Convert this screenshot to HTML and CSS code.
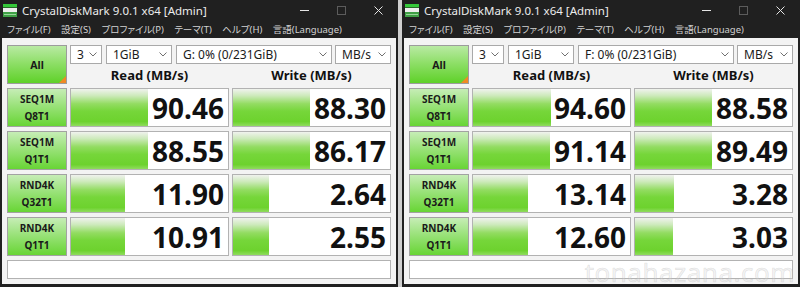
FILE: index.html
```html
<!DOCTYPE html>
<html lang="ja">
<head>
<meta charset="utf-8">
<title>CrystalDiskMark</title>
<link rel="stylesheet" href="styles.css">
</head>
<body>
<div class="screen">
  <div class="win">
    <div class="titlebar">
      <svg class="appicon" viewBox="0 0 14 13" width="14" height="13"><rect x="0" y="0" width="14" height="3" fill="#35c83a"/><rect x="0" y="3" width="14" height="1" fill="#2a6a2a"/><rect x="0" y="4" width="14" height="4" fill="#eeeeee"/><rect x="0" y="8" width="14" height="5" fill="#3f9f45"/><rect x="1" y="10" width="12" height="1" fill="#9ad69c"/></svg>
      <span class="title">CrystalDiskMark 9.0.1 x64 [Admin]</span>
      <div class="controls">
        <span class="ctl"><svg width="9" height="9" viewBox="0 0 9 9"><line x1="0" y1="4.5" x2="9" y2="4.5" stroke="#e6e6e6" stroke-width="1"/></svg></span>
        <span class="ctl"><svg width="9" height="9" viewBox="0 0 9 9"><rect x="0.5" y="0.5" width="8" height="8" fill="none" stroke="#5c5c5c" stroke-width="1"/></svg></span>
        <span class="ctl"><svg width="9" height="9" viewBox="0 0 9 9"><path d="M0.5 0.5 L8.5 8.5 M8.5 0.5 L0.5 8.5" stroke="#e6e6e6" stroke-width="1"/></svg></span>
      </div>
    </div>
    <div class="menubar"><span>ファイル(F)</span><span>設定(S)</span><span>プロファイル(P)</span><span>テーマ(T)</span><span>ヘルプ(H)</span><span>言語(Language)</span></div>
    <div class="content">
      <div class="grid">
        <div class="allbtn">All</div>
        <div class="topright">
          <div class="selects">
            <div class="sel s-count">3<svg class="chev" width="8" height="5" viewBox="0 0 8 5"><polyline points="0.5,0.5 4,4 7.5,0.5" fill="none" stroke="#707070"/></svg></div>
            <div class="sel s-size">1GiB<svg class="chev" width="8" height="5" viewBox="0 0 8 5"><polyline points="0.5,0.5 4,4 7.5,0.5" fill="none" stroke="#707070"/></svg></div>
            <div class="sel s-drive">G: 0% (0/231GiB)<svg class="chev" width="8" height="5" viewBox="0 0 8 5"><polyline points="0.5,0.5 4,4 7.5,0.5" fill="none" stroke="#707070"/></svg></div>
            <div class="sel s-unit">MB/s<svg class="chev" width="8" height="5" viewBox="0 0 8 5"><polyline points="0.5,0.5 4,4 7.5,0.5" fill="none" stroke="#707070"/></svg></div>
          </div>
          <div class="heads"><div class="head">Read (MB/s)</div><div class="head">Write (MB/s)</div></div>
        </div>
        <div class="label"><span>SEQ1M</span><span>Q8T1</span></div>
        <div class="cell" style="--w:77px">90.46</div>
        <div class="cell" style="--w:77px">88.30</div>
        <div class="label"><span>SEQ1M</span><span>Q1T1</span></div>
        <div class="cell" style="--w:77px">88.55</div>
        <div class="cell" style="--w:77px">86.17</div>
        <div class="label"><span>RND4K</span><span>Q32T1</span></div>
        <div class="cell" style="--w:54px">11.90</div>
        <div class="cell" style="--w:36px">2.64</div>
        <div class="label"><span>RND4K</span><span>Q1T1</span></div>
        <div class="cell" style="--w:54px">10.91</div>
        <div class="cell" style="--w:36px">2.55</div>
      </div>
      <div class="status"></div>
    </div>
  </div>
  <div class="win">
    <div class="titlebar">
      <svg class="appicon" viewBox="0 0 14 13" width="14" height="13"><rect x="0" y="0" width="14" height="3" fill="#35c83a"/><rect x="0" y="3" width="14" height="1" fill="#2a6a2a"/><rect x="0" y="4" width="14" height="4" fill="#eeeeee"/><rect x="0" y="8" width="14" height="5" fill="#3f9f45"/><rect x="1" y="10" width="12" height="1" fill="#9ad69c"/></svg>
      <span class="title">CrystalDiskMark 9.0.1 x64 [Admin]</span>
      <div class="controls">
        <span class="ctl"><svg width="9" height="9" viewBox="0 0 9 9"><line x1="0" y1="4.5" x2="9" y2="4.5" stroke="#e6e6e6" stroke-width="1"/></svg></span>
        <span class="ctl"><svg width="9" height="9" viewBox="0 0 9 9"><rect x="0.5" y="0.5" width="8" height="8" fill="none" stroke="#5c5c5c" stroke-width="1"/></svg></span>
        <span class="ctl"><svg width="9" height="9" viewBox="0 0 9 9"><path d="M0.5 0.5 L8.5 8.5 M8.5 0.5 L0.5 8.5" stroke="#e6e6e6" stroke-width="1"/></svg></span>
      </div>
    </div>
    <div class="menubar"><span>ファイル(F)</span><span>設定(S)</span><span>プロファイル(P)</span><span>テーマ(T)</span><span>ヘルプ(H)</span><span>言語(Language)</span></div>
    <div class="content">
      <div class="grid">
        <div class="allbtn">All</div>
        <div class="topright">
          <div class="selects">
            <div class="sel s-count">3<svg class="chev" width="8" height="5" viewBox="0 0 8 5"><polyline points="0.5,0.5 4,4 7.5,0.5" fill="none" stroke="#707070"/></svg></div>
            <div class="sel s-size">1GiB<svg class="chev" width="8" height="5" viewBox="0 0 8 5"><polyline points="0.5,0.5 4,4 7.5,0.5" fill="none" stroke="#707070"/></svg></div>
            <div class="sel s-drive">F: 0% (0/231GiB)<svg class="chev" width="8" height="5" viewBox="0 0 8 5"><polyline points="0.5,0.5 4,4 7.5,0.5" fill="none" stroke="#707070"/></svg></div>
            <div class="sel s-unit">MB/s<svg class="chev" width="8" height="5" viewBox="0 0 8 5"><polyline points="0.5,0.5 4,4 7.5,0.5" fill="none" stroke="#707070"/></svg></div>
          </div>
          <div class="heads"><div class="head">Read (MB/s)</div><div class="head">Write (MB/s)</div></div>
        </div>
        <div class="label"><span>SEQ1M</span><span>Q8T1</span></div>
        <div class="cell" style="--w:78px">94.60</div>
        <div class="cell" style="--w:77px">88.58</div>
        <div class="label"><span>SEQ1M</span><span>Q1T1</span></div>
        <div class="cell" style="--w:77px">91.14</div>
        <div class="cell" style="--w:77px">89.49</div>
        <div class="label"><span>RND4K</span><span>Q32T1</span></div>
        <div class="cell" style="--w:55px">13.14</div>
        <div class="cell" style="--w:39px">3.28</div>
        <div class="label"><span>RND4K</span><span>Q1T1</span></div>
        <div class="cell" style="--w:55px">12.60</div>
        <div class="cell" style="--w:38px">3.03</div>
      </div>
      <div class="status"></div>
    </div>
    <div class="watermark">tonahazana.com</div>
  </div>
</div>
</body>
</html>
```

FILE: styles.css
```css
html, body {
  margin: 0;
  padding: 0;
}
body {
  background: #cfcfcf;
  font-family: "Noto Sans", "Noto Sans CJK JP", sans-serif;
}
.screen {
  display: flex;
  gap: 4px;
  width: 800px;
  height: 287px;
  overflow: hidden;
}
.win {
  position: relative;
  width: 398px;
  height: 287px;
  background: #202020;
  display: flex;
  flex-direction: column;
  flex: none;
}
.titlebar {
  height: 20px;
  display: flex;
  align-items: center;
}
.appicon {
  margin-left: 3px;
  flex: none;
}
.title {
  margin-left: 5px;
  font-size: 11.5px;
  color: #ececec;
  white-space: nowrap;
}
.controls {
  margin-left: auto;
  display: flex;
  margin-right: 1px;
}
.ctl {
  width: 37px;
  height: 20px;
  display: flex;
  align-items: center;
  justify-content: center;
}
.menubar {
  height: 18px;
  display: flex;
  align-items: center;
  padding-left: 7px;
  gap: 10.5px;
  font-size: 9.5px;
  color: #d2d2d2;
  font-feature-settings: "palt";
  white-space: nowrap;
}
.content {
  margin: 0 2px;
  background: #f3f3f3;
  height: 246px;
  padding: 7px 5px 5px;
  box-sizing: border-box;
}
.grid {
  display: grid;
  grid-template-columns: 60px 159px 159px;
  grid-auto-rows: 39px;
  column-gap: 3px;
  row-gap: 4px;
}
.allbtn {
  position: relative;
  box-sizing: border-box;
  border: 1px solid #9c9c9c;
  background: linear-gradient(#b9eaa3, #8fdf69 45%, #5fd129);
  display: flex;
  align-items: center;
  justify-content: center;
  font-weight: 700;
  font-size: 10.5px;
  color: #1a1a1a;
  overflow: hidden;
}
.allbtn::after {
  content: "";
  position: absolute;
  right: 0;
  bottom: 0;
  width: 0;
  height: 0;
  border-left: 7px solid transparent;
  border-bottom: 7px solid #f08a24;
}
.topright {
  grid-column: 2 / 4;
  display: flex;
  flex-direction: column;
}
.selects {
  height: 19px;
  display: flex;
  gap: 4px;
}
.sel {
  box-sizing: border-box;
  height: 19px;
  background: #fff;
  border: 1px solid #a9a9a9;
  display: flex;
  align-items: center;
  padding: 0 4px 0 6px;
  font-size: 12px;
  color: #1a1a1a;
  white-space: nowrap;
}
.chev {
  margin-left: auto;
  flex: none;
}
.s-count { width: 32px; }
.s-size { width: 66px; }
.s-drive { width: 156px; margin-right: -1px; }
.s-unit { width: 56px; }
.heads {
  flex: 1;
  display: grid;
  grid-template-columns: 159px 159px;
  column-gap: 3px;
}
.head {
  display: flex;
  align-items: center;
  justify-content: center;
  font-weight: 700;
  font-size: 13px;
  color: #111;
  padding-top: 1px;
}
.label {
  box-sizing: border-box;
  border: 1px solid #a2a2a2;
  background: linear-gradient(#c6edb6, #9ae27a 45%, #68d535);
  display: flex;
  flex-direction: column;
  align-items: center;
  justify-content: center;
  font-weight: 700;
  font-size: 10px;
  line-height: 16.5px;
  color: #1a1a1a;
}
.cell {
  box-sizing: border-box;
  border: 1px solid #b2b2b2;
  background-color: #fff;
  background-image: linear-gradient(#f0f2ee 0%, #cdeabb 18%, #93dc62 40%, #76d63a 60%, #6dd22e 88%, #90dc5e 100%);
  background-repeat: no-repeat;
  background-size: var(--w) 100%;
  display: flex;
  align-items: center;
  justify-content: flex-end;
  padding-right: 4px;
  font-weight: 700;
  font-size: 28px;
  color: #111;
  line-height: 1;
}
.status {
  margin-top: 4px;
  height: 19px;
  box-sizing: border-box;
  border: 1px solid #b2b2b2;
  background: #fff;
}
.watermark {
  position: absolute;
  right: 5px;
  bottom: 0;
  font-size: 26px;
  line-height: 30px;
  color: rgba(215, 215, 215, 0.3);
  -webkit-text-stroke: 0.6px rgba(170, 170, 170, 0.32);
  letter-spacing: 0.5px;
  white-space: nowrap;
}
```
